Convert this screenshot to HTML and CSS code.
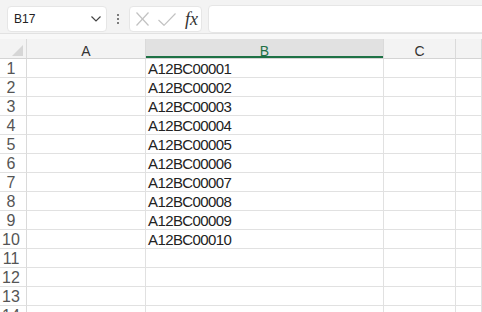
FILE: index.html
```html
<!DOCTYPE html>
<html>
<head>
  <meta charset="UTF-8">
  <title>Sheet1</title>
  <link rel="stylesheet" href="styles.css">
</head>
<body>
  <div class="toolbar">
    <div class="namebox">
      <span class="namebox__text">B17</span>
      <svg class="namebox__arrow" width="10" height="6" viewBox="0 0 10 6">
        <polyline points="0.5,0.5 5,5 9.5,0.5" fill="none" stroke="#444" stroke-width="1.2"/>
      </svg>
    </div>
    <div class="dots">
      <span></span><span></span><span></span>
    </div>
    <div class="fbuttons">
      <svg class="fbuttons__icon" width="13" height="14" viewBox="0 0 13 14">
        <line x1="0.5" y1="0.5" x2="12.5" y2="13.5" stroke="#c2c2c2" stroke-width="1.2"/>
        <line x1="12.5" y1="0.5" x2="0.5" y2="13.5" stroke="#c2c2c2" stroke-width="1.2"/>
      </svg>
      <svg class="fbuttons__icon" width="18" height="13" viewBox="0 0 18 13">
        <polyline points="0.5,7 6,12.3 17.5,0.5" fill="none" stroke="#c2c2c2" stroke-width="1.2"/>
      </svg>
      <span class="fbuttons__fx">fx</span>
    </div>
    <div class="formula"></div>
  </div>
  <div class="strip"></div>

  <div class="sheet">
    <div class="corner"><span class="corner__tri"></span></div>
    <div class="colhead">A</div>
    <div class="colhead colhead--active">B</div>
    <div class="colhead">C</div>
    <div class="colhead"></div>
  </div>
  <div class="sheet" id="rows"></div>

  <script>
    // Build the grid rows, column B holds the codes
    const rows = document.getElementById('rows');
    for (let i = 1; i <= 14; i++) {
      const code = i <= 10 ? 'A12BC' + String(i).padStart(5, '0') : '';
      rows.insertAdjacentHTML('beforeend',
        '<div class="rowhead">' + i + '</div>' +
        '<div class="cell"></div>' +
        '<div class="cell">' + code + '</div>' +
        '<div class="cell"></div>' +
        '<div class="cell"></div>');
    }
  </script>
</body>
</html>
```

FILE: styles.css
```css
body {
  margin: 0;
  width: 482px;
  height: 312px;
  overflow: hidden;
  background: #fff;
  font-family: "Liberation Sans", Arial, sans-serif;
  color: #222;
}

/* Formula bar */
.toolbar {
  display: flex;
  align-items: center;
  height: 33px;
  padding-left: 7px;
  background: #f3f3f3;
  border-bottom: 1px solid #e2e2e2;
  overflow: hidden;
}

.namebox {
  display: flex;
  align-items: center;
  justify-content: space-between;
  box-sizing: border-box;
  width: 100px;
  height: 26px;
  margin-top: 5px;
  padding: 0 5px 0 6px;
  background: #fff;
  border: 1px solid #e6e6e6;
  border-radius: 4px;
  font-size: 12px;
  color: #222;
}

.dots {
  display: flex;
  flex-direction: column;
  align-items: center;
  gap: 2px;
  width: 22px;
  margin-top: 5px;
}

.dots span {
  width: 2px;
  height: 2px;
  background: #555;
  border-radius: 1px;
}

.fbuttons {
  display: flex;
  align-items: center;
  box-sizing: border-box;
  width: 73px;
  height: 26px;
  margin-top: 5px;
  padding-left: 6px;
  gap: 9px;
  background: #fff;
  border: 1px solid #e6e6e6;
  border-radius: 4px;
}

.fbuttons__fx {
  font-family: "Liberation Serif", "Times New Roman", serif;
  font-style: italic;
  font-size: 18px;
  color: #333;
  margin-left: 0;
}

.formula {
  flex: 1;
  height: 26px;
  margin: 5px -10px 0 6px;
  background: #fff;
  border: 1px solid #e6e6e6;
  border-radius: 4px;
}

.strip {
  height: 5px;
  background: #f8f8f8;
}

/* Grid */
.sheet {
  display: grid;
  grid-template-columns: 27px 119px 238px 72px 1fr;
}

.corner,
.colhead {
  box-sizing: border-box;
  height: 20px;
  background: #f3f3f3;
  border-right: 1px solid #dadada;
  border-bottom: 1px solid #d4d4d4;
}

.corner {
  position: relative;
}

.corner__tri {
  position: absolute;
  right: 3px;
  bottom: 2px;
  width: 0;
  height: 0;
  border-left: 11px solid transparent;
  border-bottom: 11px solid #d6d6d6;
}

.colhead {
  padding-top: 4px;
  line-height: 16px;
  font-size: 14px;
  text-align: center;
  color: #333;
}

.colhead--active {
  background: #e1e1e1;
  color: #1e7145;
  box-shadow: inset 0 -2px 0 #1e7145;
}

.rowhead,
.cell {
  box-sizing: border-box;
  height: 19px;
  border-right: 1px solid #e1e1e1;
  border-bottom: 1px solid #e1e1e1;
  padding-top: 2px;
  line-height: 16px;
  white-space: nowrap;
  overflow: hidden;
}

.rowhead {
  padding-right: 4px;
  background: #fff;
  border-right-color: #dadada;
  text-align: center;
  font-size: 16px;
  color: #555;
}

.cell {
  padding-left: 2px;
  font-size: 15px;
  letter-spacing: -0.6px;
  color: #222;
}
```
